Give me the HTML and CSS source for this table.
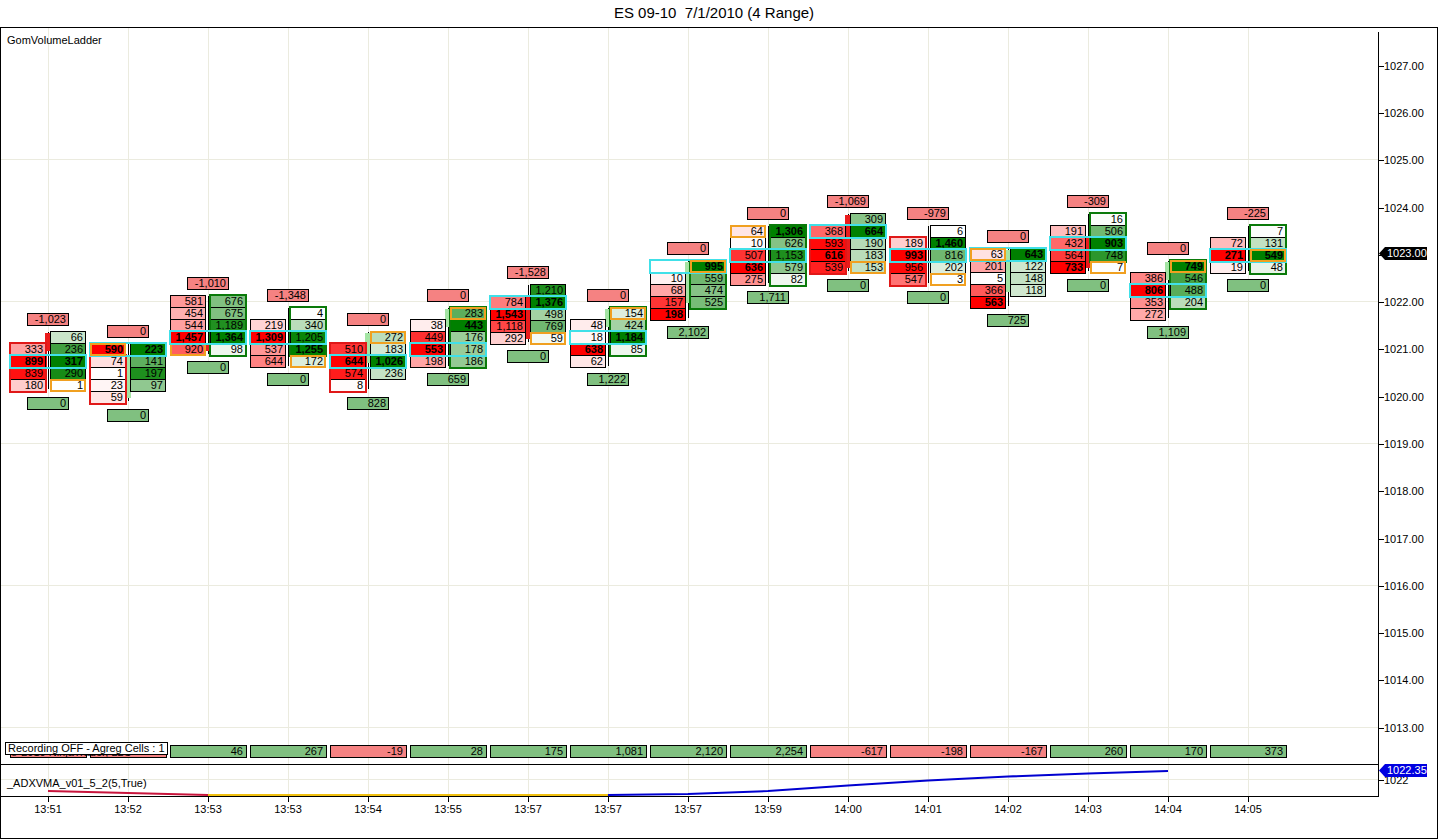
FILE: index.html
```html
<!DOCTYPE html>
<html lang="en">
<head>
<meta charset="utf-8">
<title>ES 09-10 7/1/2010 (4 Range)</title>
<link rel="stylesheet" href="styles.css">
</head>
<body>
<div class="title">ES 09-10&nbsp; 7/1/2010 (4 Range)</div>
<div class="frame">
  <div class="panel-main">
    <div class="plot">
      <svg class="grid" width="1377" height="736" viewBox="0 0 1377 736">
        <path d="M47.5 0V736M127.5 0V736M207.5 0V736M287.5 0V736M367.5 0V736M447.5 0V736M527.5 0V736M607.5 0V736M687.5 0V736M767.5 0V736M847.5 0V736M927.5 0V736M1007.5 0V736M1087.5 0V736M1167.5 0V736M1247.5 0V736M0 131.5H1377M0 273.5H1377M0 415.5H1377M0 557.5H1377M0 699.5H1377"/>
      </svg>
      <div class="plot-name">GomVolumeLadder</div>
      <div class="net-row">
        <div class="net neg"></div>
        <div class="net neg"></div>
        <div class="net pos">46</div>
        <div class="net pos">267</div>
        <div class="net neg">-19</div>
        <div class="net pos">28</div>
        <div class="net pos">175</div>
        <div class="net pos">1,081</div>
        <div class="net pos">2,120</div>
        <div class="net pos">2,254</div>
        <div class="net neg">-617</div>
        <div class="net neg">-198</div>
        <div class="net neg">-167</div>
        <div class="net pos">260</div>
        <div class="net pos">170</div>
        <div class="net pos">373</div>
      </div>
      <div class="copyright"><span class="copyright-text">© 2010 NinjaTrader, LLC</span></div>
      <div class="recording">Recording OFF - Agreg Cells : 1</div>
      <div class="bars" id="bars"></div>
    </div>
    <div class="axis">
      <div class="ticks">
        <div class="tl">1027.00</div>
        <div class="tl">1026.00</div>
        <div class="tl">1025.00</div>
        <div class="tl">1024.00</div>
        <div class="tl covered"><span class="hidden-label">1023.00</span></div>
        <div class="tl">1022.00</div>
        <div class="tl">1021.00</div>
        <div class="tl">1020.00</div>
        <div class="tl">1019.00</div>
        <div class="tl">1018.00</div>
        <div class="tl">1017.00</div>
        <div class="tl">1016.00</div>
        <div class="tl">1015.00</div>
        <div class="tl">1014.00</div>
        <div class="tl">1013.00</div>
      </div>
      <div class="price-tag last">1023.00</div>
    </div>
  </div>
  <div class="panel-ind">
    <div class="ind-plot">
      <svg class="ind-grid" width="1377" height="31" viewBox="0 0 1377 31">
        <path class="gl" d="M47.5 0V31M127.5 0V31M207.5 0V31M287.5 0V31M367.5 0V31M447.5 0V31M527.5 0V31M607.5 0V31M687.5 0V31M767.5 0V31M847.5 0V31M927.5 0V31M1007.5 0V31M1087.5 0V31M1167.5 0V31M1247.5 0V31M0 14.5H1377"/>
        <path class="adx-red" d="M47 26L207 30"/>
        <path class="adx-gold" d="M207 30H607"/>
        <path class="adx-blue" d="M607 30L687 29L767 26L847 20.5L927 15.5L1007 11.5L1087 8.5L1167 6"/>
      </svg>
      <div class="ind-name">_ADXVMA_v01_5_2(5,True)</div>
    </div>
    <div class="ind-axis">
      <div class="tl-s">1022</div>
      <div class="price-tag adx">1022.35</div>
    </div>
  </div>
  <div class="time-axis">
    <div class="t">13:51</div>
    <div class="t">13:52</div>
    <div class="t">13:53</div>
    <div class="t">13:53</div>
    <div class="t">13:54</div>
    <div class="t">13:55</div>
    <div class="t">13:57</div>
    <div class="t">13:57</div>
    <div class="t">13:57</div>
    <div class="t">13:59</div>
    <div class="t">14:00</div>
    <div class="t">14:01</div>
    <div class="t">14:02</div>
    <div class="t">14:03</div>
    <div class="t">14:04</div>
    <div class="t">14:05</div>
  </div>
</div>
<script src="script.js"></script>
</body>
</html>
```

FILE: styles.css
```css
* { box-sizing: border-box; }
html, body { margin: 0; padding: 0; background: #fff; }
body {
  width: 1440px;
  height: 840px;
  overflow: hidden;
  font-family: "Liberation Sans", Arial, sans-serif;
  font-size: 11px;
  color: #000;
}
.title {
  height: 27px;
  padding: 4px 12px 0 0;
  font-size: 15px;
  line-height: 17px;
  text-align: center;
  white-space: pre;
}
.frame {
  width: 1438px;
  height: 812px;
  border: 1px solid #000;
  display: flex;
  flex-direction: column;
}
.panel-main { display: flex; height: 737px; flex: none; }
.plot {
  position: relative;
  z-index: 0;
  width: 1377px;
  flex: none;
  border-bottom: 1px solid #000;
  display: flex;
  flex-direction: column;
}
.grid { position: absolute; left: 0; top: 0; z-index: -1; }
.grid path, .ind-grid .gl { stroke: #ebebdf; stroke-width: 1; fill: none; }
.plot-name { padding: 6px 0 0 6px; line-height: 13px; }
.net-row {
  margin-top: auto;
  margin-bottom: 6px;
  padding-left: 9px;
  display: flex;
  gap: 3px;
}
.net {
  width: 77px;
  height: 13px;
  flex: none;
  border: 1px solid #000;
  text-align: right;
  padding-right: 3px;
  line-height: 11px;
}
.pos { background: #80c080; }
.neg { background: #f58282; }
.copyright {
  position: absolute;
  left: 9px;
  top: 727px;
  height: 4px;
  overflow: hidden;
  z-index: 5;
  white-space: nowrap;
}
.copyright-text {
  display: block;
  line-height: 13px;
  margin-top: -9px;
}
.recording {
  position: absolute;
  left: 4px;
  top: 714px;
  width: 163px;
  height: 13px;
  border: 1px solid #000;
  background: #fff;
  line-height: 11px;
  padding-left: 2px;
  z-index: 6;
  white-space: nowrap;
}
.bars { position: absolute; left: 0; top: 0; right: 0; bottom: 0; }
.bar {
  position: absolute;
  width: 76px;
  display: flex;
  flex-direction: column;
  align-items: center;
  z-index: 1;
}
.tag {
  width: 42px;
  height: 13px;
  border: 1px solid #000;
  text-align: right;
  padding-right: 2px;
  line-height: 11px;
  white-space: nowrap;
}
.tag.delta { margin-bottom: 5px; }
.tag.vol { margin-top: 6px; }
.stack {
  position: relative;
  width: 76px;
  display: flex;
  flex-direction: column;
}
.row {
  display: flex;
  justify-content: space-between;
  height: 13px;
  margin-bottom: -1px;
}
.cell {
  width: 36px;
  height: 13px;
  border: 1px solid #000;
  text-align: right;
  padding-right: 2px;
  line-height: 11px;
  white-space: nowrap;
  overflow: hidden;
}
.cell.empty { border-color: transparent; }
.cell.max { font-weight: bold; }
.cell.open {
  position: relative;
  z-index: 3;
  border-color: #f0a020;
  box-shadow: inset 0 0 0 1px #f0a020;
}
.row.poc {
  position: relative;
  z-index: 4;
  outline: 2px solid #40e0e8;
  outline-offset: -1px;
}
.col-ol {
  position: absolute;
  z-index: 2;
  width: 38px;
  border: 2px solid #000;
}
.col-ol.dn { border-color: #e01818; }
.col-ol.up { border-color: #0a7a0a; }
.candle { position: absolute; left: 35px; width: 6px; z-index: -1; }
.candle.up { background: #a4e4a4; }
.candle.dn { background: #ea1c1c; }
.wick { position: absolute; left: 38px; width: 1px; background: #000; z-index: -1; }

.axis {
  flex: 1;
  margin-top: 4px;
  border-left: 1px solid #000;
  position: relative;
}
.ticks { padding-top: 10.6px; }
.tl {
  height: 47.29px;
  display: flex;
  align-items: center;
  line-height: 13px;
  white-space: nowrap;
}
.tl::before, .tl-s::before {
  content: "";
  width: 5px;
  height: 1px;
  background: #000;
  flex: none;
}
.hidden-label { visibility: hidden; }
.price-tag {
  position: absolute;
  left: 0;
  width: 48px;
  height: 13px;
  color: #fff;
  line-height: 13px;
  padding-left: 8px;
  white-space: nowrap;
  clip-path: polygon(0 50%, 6px 0, 100% 0, 100% 100%, 6px 100%);
}
.price-tag.last { top: 215px; background: #000; }
.price-tag.adx { top: -1px; background: #0000e0; }

.panel-ind { display: flex; height: 32px; flex: none; }
.ind-plot {
  position: relative;
  z-index: 0;
  width: 1377px;
  flex: none;
  border-bottom: 1px solid #000;
}
.ind-grid { position: absolute; left: 0; top: 0; z-index: -1; }
.adx-red { stroke: #c8143c; stroke-width: 2; fill: none; }
.adx-gold { stroke: #f0c010; stroke-width: 2; fill: none; }
.adx-blue { stroke: #0000d0; stroke-width: 2; fill: none; }
.ind-name { padding: 12px 0 0 6px; line-height: 13px; white-space: nowrap; }
.ind-axis { flex: 1; border-left: 1px solid #000; position: relative; }
.tl-s {
  margin-top: 10px;
  height: 11px;
  display: flex;
  align-items: center;
  line-height: 11px;
}

.time-axis { flex: 1; display: flex; padding-left: 7px; }
.t {
  width: 80px;
  flex: none;
  text-align: center;
  position: relative;
  padding-top: 6px;
  line-height: 13px;
}
.t::before {
  content: "";
  position: absolute;
  left: 40px;
  top: 0;
  width: 1px;
  height: 5px;
  background: #000;
}
```

FILE: script.js
```js
(function () {
  var Y0 = 65, PPT = 47.29, PX = 1, PY = 28;
  function yc(p) { return Y0 + (1027 - p) * PPT; }
  function fmt(v) { return String(v).replace(/\B(?=(\d{3})+(?!\d))/g, ','); }
  function red(r) { var v = Math.round(255 * (1 - r)); return 'rgb(255,' + v + ',' + v + ')'; }
  function green(r) {
    var a = Math.round(255 * (1 - r)), b = Math.round(255 - 127 * r);
    return 'rgb(' + a + ',' + b + ',' + a + ')';
  }
  function div(cls, text) {
    var d = document.createElement('div');
    d.className = cls;
    if (text != null) d.textContent = text;
    return d;
  }

  var BARS = [
    {i:0, top:1021.25, rows:[[null,66],[333,236],[899,317],[839,290],[180,1]], poc:2, open:[4,'R'], ol:['L',1,4], d:'-1,023', v:'0', body:['r',1021.25,1021.0], wick:[1021.25,1020.25]},
    {i:1, top:1021.0, rows:[[590,223],[74,141],[1,197],[23,97],[59,null]], poc:0, open:[0,'L'], ol:['L',1,4], d:'0', v:'0', body:['g',1020.75,1020.0], wick:[1021.0,1020.0]},
    {i:2, top:1022.0, rows:[[581,676],[454,675],[544,1189],[1457,1364],[920,98]], poc:3, open:[4,'L'], ol:['R',0,4], d:'-1,010', v:'0', body:['r',1021.0,1021.0], wick:[1022.0,1021.0]},
    {i:3, top:1021.75, rows:[[null,4],[219,340],[1309,1205],[537,1255],[644,172]], poc:2, open:[4,'R'], ol:['R',0,3], d:'-1,348', v:'0', body:null, wick:[1021.75,1020.75]},
    {i:4, top:1021.25, rows:[[null,272],[510,183],[644,1026],[574,236],[8,null]], poc:2, open:[0,'R'], ol:['L',1,4], d:'0', v:'828', body:['g',1021.25,1020.75], wick:[1021.25,1020.25]},
    {i:5, top:1021.75, rows:[[null,283],[38,443],[449,176],[553,178],[198,186]], poc:3, open:[0,'R'], ol:['R',0,4], d:'0', v:'659', body:['g',1021.75,1021.5], wick:[1021.75,1020.75]},
    {i:6, top:1022.25, rows:[[null,1210],[784,1376],[1543,498],[1118,769],[292,59]], poc:1, open:[4,'R'], ol:null, d:'-1,528', v:'0', body:['r',1022.0,1021.25], wick:[1022.25,1021.25]},
    {i:7, top:1021.75, rows:[[null,154],[48,424],[18,1184],[638,85],[62,null]], poc:2, open:[0,'R'], ol:['R',0,3], d:'0', v:'1,222', body:['g',1021.75,1021.5], wick:[1021.75,1020.75]},
    {i:8, top:1022.75, rows:[[null,995],[10,559],[68,474],[157,525],[198,null]], poc:0, open:[0,'R'], ol:['R',0,3], d:'0', v:'2,102', body:['g',1022.75,1022.0], wick:[1022.75,1021.75]},
    {i:9, top:1023.5, rows:[[64,1306],[10,626],[507,1153],[636,579],[275,82]], poc:2, open:[0,'L'], ol:['R',0,4], d:'0', v:'1,711', body:null, wick:[1023.5,1022.5]},
    {i:10, top:1023.75, rows:[[null,309],[368,664],[593,190],[616,183],[539,153]], poc:1, open:[4,'R'], ol:['L',1,4], d:'-1,069', v:'0', body:['r',1023.75,1022.75], wick:[1023.75,1022.75]},
    {i:11, top:1023.5, rows:[[null,6],[189,1460],[993,816],[956,202],[547,3]], poc:2, open:[4,'R'], ol:['L',1,4], d:'-979', v:'0', body:null, wick:[1023.5,1022.5]},
    {i:12, top:1023.0, rows:[[63,643],[201,122],[5,148],[366,118],[563,null]], poc:0, open:[0,'L'], ol:null, d:'0', v:'725', body:['g',1023.0,1022.25], wick:[1023.0,1022.0]},
    {i:13, top:1023.75, rows:[[null,16],[191,506],[432,903],[564,748],[733,7]], poc:2, open:[4,'R'], ol:['R',0,3], d:'-309', v:'0', body:['r',1023.25,1022.75], wick:[1023.75,1022.75]},
    {i:14, top:1022.75, rows:[[null,749],[386,546],[806,488],[353,204],[272,null]], poc:2, open:[0,'R'], ol:['R',0,3], d:'0', v:'1,109', body:['g',1022.75,1022.5], wick:[1022.75,1021.75]},
    {i:15, top:1023.5, rows:[[null,7],[72,131],[271,549],[19,48]], poc:2, open:[2,'R'], ol:['R',0,3], d:'-225', v:'0', body:null, wick:[1023.5,1022.75]}
  ];

  var layer = document.getElementById('bars');
  BARS.forEach(function (b) {
    var c = 48 + 80 * b.i;
    var stackTop = Math.round(yc(b.top) - 6);
    var top = stackTop - 18;
    var bar = div('bar');
    bar.style.left = (c - 38 - PX) + 'px';
    bar.style.top = (top - PY) + 'px';
    bar.appendChild(div('tag delta neg', b.d));

    var stack = div('stack');
    var maxL = 0, maxR = 0;
    b.rows.forEach(function (r) {
      if (r[0] != null && r[0] > maxL) maxL = r[0];
      if (r[1] != null && r[1] > maxR) maxR = r[1];
    });
    b.rows.forEach(function (r, k) {
      var row = div(k === b.poc ? 'row poc' : 'row');
      for (var s = 0; s < 2; s++) {
        var v = r[s];
        if (v == null) { row.appendChild(div('cell empty')); continue; }
        var mx = s ? maxR : maxL;
        var cls = 'cell';
        if (v === mx) cls += ' max';
        var side = s ? 'R' : 'L';
        if (b.open && b.open[0] === k && b.open[1] === side) cls += ' open';
        var cell = div(cls, fmt(v));
        cell.style.background = s ? green(v / mx) : red(v / mx);
        row.appendChild(cell);
      }
      stack.appendChild(row);
    });
    if (b.ol) {
      var o = div('col-ol ' + (b.ol[0] === 'L' ? 'dn' : 'up'));
      o.style.left = (b.ol[0] === 'L' ? -1 : 39) + 'px';
      o.style.top = (b.ol[1] * 12 - 1) + 'px';
      o.style.height = ((b.ol[2] - b.ol[1]) * 12 + 15) + 'px';
      stack.appendChild(o);
    }
    bar.appendChild(stack);
    bar.appendChild(div('tag vol pos', b.v));

    var w = div('wick');
    var wt = Math.round(yc(b.wick[0]) - 5), wb = Math.round(yc(b.wick[1]) + 5);
    w.style.top = (wt - top) + 'px';
    w.style.height = (wb - wt) + 'px';
    bar.appendChild(w);

    if (b.body) {
      var bt = Math.round(yc(b.body[1]) - 4), bb = Math.round(yc(b.body[2]) + 2);
      var bd = div('candle ' + (b.body[0] === 'g' ? 'up' : 'dn'));
      bd.style.top = (bt - top) + 'px';
      bd.style.height = Math.max(3, bb - bt) + 'px';
      bar.appendChild(bd);
    }
    layer.appendChild(bar);
  });
})();
```
